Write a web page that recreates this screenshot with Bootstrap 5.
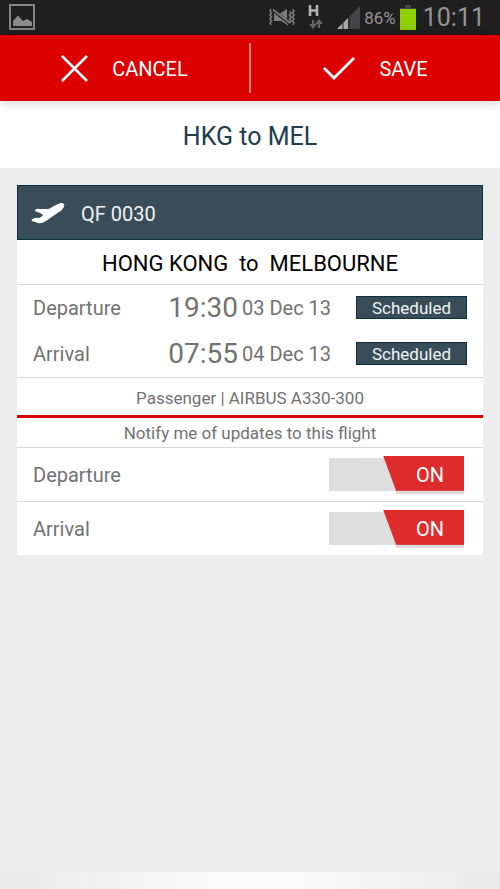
<!DOCTYPE html>
<html lang="en">
<head>
<meta charset="utf-8">
<meta name="viewport" content="width=device-width, initial-scale=1">
<title>HKG to MEL</title>
<link href="https://cdn.jsdelivr.net/npm/bootstrap@5.3.0/dist/css/bootstrap.min.css" rel="stylesheet">
<style>
  body { font-family: Roboto, "Liberation Sans", sans-serif; background: #ededed; color: #727272; font-size: 20px; line-height: 24px; }
  svg { display: block; flex: none; }
  .status-bar { background: #1f1f1f; color: #959595; height: 35px; border-bottom: 1px solid #3a1414; padding: 0 15px 0 9px; }
  .net-icon { margin: 0 12px; }
  .status-pct { font-size: 17px; margin: 2px 4px 0 4px; }
  .status-clock { font-size: 25px; line-height: 28px; margin-left: 7px; padding-top: 2px; }
  .action-bar { background: #dc0000; height: 66px; box-shadow: 0 1px 12px rgba(0,0,0,.2); z-index: 1; }
  .action-btn { color: #fff; font-size: 20px; line-height: 24px; }
  .action-btn span { padding-top: 2px; }
  .action-rule { width: 2px; margin: 8px 0; background: #ee8080; }
  .route-title { color: #213c4c; font-size: 25px; line-height: 30px; padding: 21px 0 16px; }
  .flight-card { margin: 17px 17px 0; }
  .flight-head { background: #384d58; border: 1px solid #0b3140; color: #f0f3f4; height: 55px; padding: 2px 13px 0; gap: 16px; }
  .line-b { border-bottom: 1px solid #d8d8d8; }
  .city-line { color: #000; font-size: 22px; line-height: 28px; padding: 10px 0 6px; white-space: pre; }
  .leg { padding: 0 16px; height: 46px; }
  .leg-time { font-size: 28px; line-height: 32px; width: 87px; }
  .leg-date { width: 90px; margin: 0 24px 0 4px; }
  .tag { background: #384d58; border: 1px solid #0b3140; color: #f0f3f4; width: 111px; font-size: 17px; line-height: 22px; height: 23px; margin-top: -2px; }
  .note { font-size: 17px; line-height: 22px; }
  .plane-line { padding: 9px 0 6px; border-bottom: 3px solid #dc0000; }
  .notify-line { padding: 4px 0 3px; }
  .toggle-row { min-height: 53px; padding: 0 19px 0 16px; box-sizing: content-box; }
  .toggle { width: 135px; height: 38px; }
  .toggle input { appearance: none; width: 100%; height: 33px; margin: 2px 0 0; background: #dedede; display: block; cursor: pointer; }
  .knob { right: 0; top: 0; width: 81px; height: 35px; background: #de2c2c; border-bottom: 1px solid #dc0000; clip-path: polygon(0 0, 100% 0, 100% 100%, 13px 100%); color: #fff; padding: 4px 0 0 13px; pointer-events: none; }
  .knob-shade { right: 0; bottom: 0; width: 68px; height: 3px; background: #dcdcdc; }
  .toggle input:not(:checked) ~ span { visibility: hidden; }
  .bottom-glow { height: 17px; background: linear-gradient(90deg, #e9e9e9, #fcfcfc 45%, #fcfcfc 58%, #e9e9e9); }
</style>
</head>
<body class="d-flex flex-column min-vh-100">
<div class="status-bar d-flex align-items-center">
  <svg class="me-auto" width="26" height="26" viewBox="0 0 26 26"><path d="M1 1H25V25H1Z" fill="none" stroke="#858585" stroke-width="2"/><path d="M4 22V17L9 11.500L14 17L18 15L23 18V22Z" fill="#8b8b8b"/></svg>
  <svg width="26" height="18" viewBox="0 0 26 18"><g fill="none" stroke="#7c7c7c" stroke-width="1.600"><path d="M2 1L1 3L2.500 5L1 7L2.500 9L1 11L2.500 13L1 15L2 17M24 1L25 3L23.500 5L25 7L23.500 9L25 11L23.500 13L25 15L24 17M21 3L22 5L20.500 7L22 9L20.500 11L22 13L21 15"/></g><path d="M5 5L19 16V17.500L12 13H5ZM11 5.500L18 1V11.500Z" fill="#7c7c7c"/><path d="M4 1.500L21 15" stroke="#7c7c7c" stroke-width="1.800"/></svg>
  <svg class="net-icon" width="18" height="24" viewBox="0 0 18 24"><path d="M3 0V11M10 0V11M3 5.500H10" stroke="#b4b4b4" stroke-width="2.600" fill="none"/><path d="M6 15V21M12 23V16" stroke="#666" stroke-width="2.200"/><path d="M2 19H10L6 24ZM8 19H16L12 14Z" fill="#666"/></svg>
  <svg width="23" height="23" viewBox="0 0 23 23"><path d="M23 0V23H0Z" fill="#444"/><path d="M11 12V23H0Z" fill="#aaa"/><path d="M6 17V23M12 11V23" stroke="#1f1f1f"/></svg>
  <span class="status-pct">86%</span>
  <svg width="16" height="25" viewBox="0 0 16 25"><path d="M5 0H11V3H16V5H0V3H5Z" fill="#444"/><path d="M0 4H16V25H0Z" fill="#90d000"/></svg>
  <span class="status-clock">10:11</span>
</div>
<header class="action-bar d-flex position-relative">
  <button type="button" class="action-btn btn rounded-0 border-0 p-0 col d-flex align-items-center justify-content-center gap-4">
    <svg width="27" height="27" viewBox="0 0 27 27"><path d="M1 1L26 26M26 1L1 26" stroke="#fff" stroke-width="2.500"/></svg><span>CANCEL</span></button>
  <div class="action-rule"></div>
  <button type="button" class="action-btn btn rounded-0 border-0 p-0 col d-flex align-items-center justify-content-center gap-4">
    <svg width="32" height="24" viewBox="0 0 32 24"><path d="M1 12L11 22L31 2" fill="none" stroke="#fff" stroke-width="2.800"/></svg><span>SAVE</span></button>
</header>
<h1 class="route-title bg-white text-center fw-normal m-0">HKG to MEL</h1>
<main class="flight-card bg-white">
  <div class="flight-head d-flex align-items-center">
    <svg width="34" height="22" viewBox="0 0 34 22"><path d="M4 7Q6 5 9 6H17Q19 6 21 4L27 1Q31 -1 33 1Q34 3 31 7Q25 11 15 18Q10 21 7 20L1 18Q0 16 2 16Q4 14 8 15Q11 14 12 12Q11 11 9 10L4 8Z" fill="#fff"/></svg>
    <span>QF 0030</span>
  </div>
  <h2 class="city-line line-b text-center fw-normal m-0">HONG KONG  to  MELBOURNE</h2>
  <div class="line-b">
    <div class="leg d-flex align-items-center"><span class="me-auto">Departure</span><span class="leg-time text-end">19:30</span><span class="leg-date">03 Dec 13</span><span class="tag text-center">Scheduled</span></div>
    <div class="leg d-flex align-items-center"><span class="me-auto">Arrival</span><span class="leg-time text-end">07:55</span><span class="leg-date">04 Dec 13</span><span class="tag text-center">Scheduled</span></div>
  </div>
  <div class="note plane-line text-center">Passenger | AIRBUS A330-300</div>
  <div class="note notify-line line-b text-center">Notify me of updates to this flight</div>
  <div class="toggle-row line-b d-flex align-items-center justify-content-between">
    <label for="notify-dep">Departure</label>
    <div class="toggle position-relative"><input type="checkbox" role="switch" id="notify-dep" checked><span class="knob-shade position-absolute"></span><span class="knob position-absolute d-flex align-items-center justify-content-center">ON</span></div>
  </div>
  <div class="toggle-row d-flex align-items-center justify-content-between">
    <label for="notify-arr">Arrival</label>
    <div class="toggle position-relative"><input type="checkbox" role="switch" id="notify-arr" checked><span class="knob-shade position-absolute"></span><span class="knob position-absolute d-flex align-items-center justify-content-center">ON</span></div>
  </div>
</main>
<div class="bottom-glow mt-auto"></div>
<script src="https://cdn.jsdelivr.net/npm/bootstrap@5.3.0/dist/js/bootstrap.bundle.min.js"></script>
</body>
</html>
